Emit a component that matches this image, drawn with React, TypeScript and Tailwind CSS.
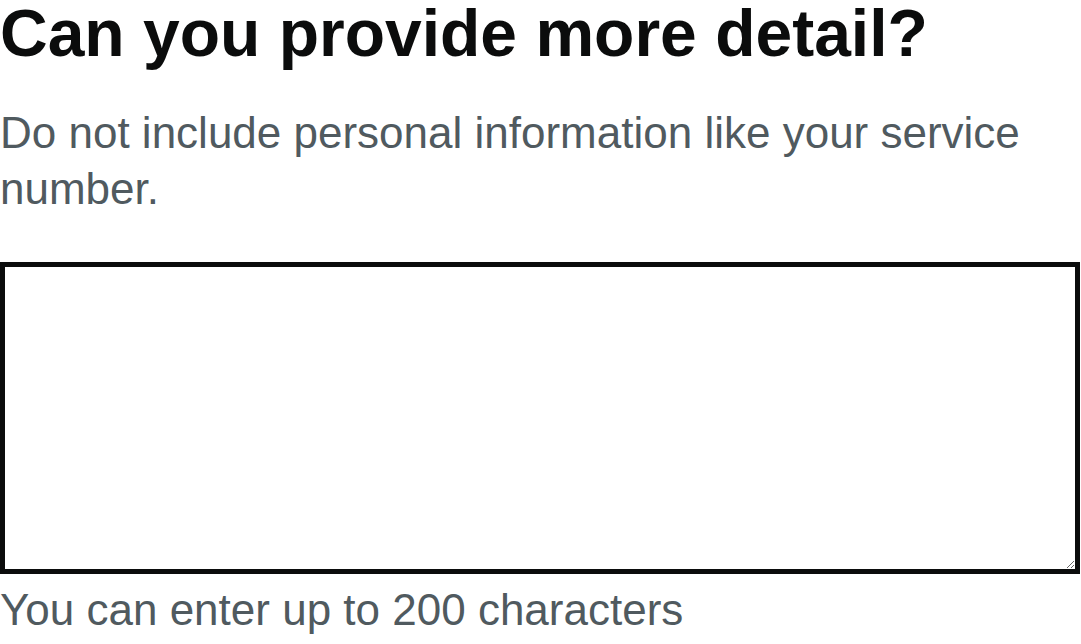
export default function App() {
  return (
    <div className="w-[1081px] bg-white font-['Liberation_Sans',Arial,sans-serif] text-[#0b0c0c]">
      <h1 className="text-[66px] leading-[66px] font-bold">Can you provide more detail?</h1>
      <p className="mt-[39px] text-[44px] leading-[56px] text-[#505a5f]">
        Do not include personal information like your service number.
      </p>
      <textarea
        aria-label="More detail"
        className="mt-[45px] block h-[312px] w-[1080px] border-[5px] border-[#0b0c0c] bg-white"
      />
      <p className="mt-[8px] text-[44px] leading-[56px] text-[#505a5f]">You can enter up to 200 characters</p>
    </div>
  );
}
